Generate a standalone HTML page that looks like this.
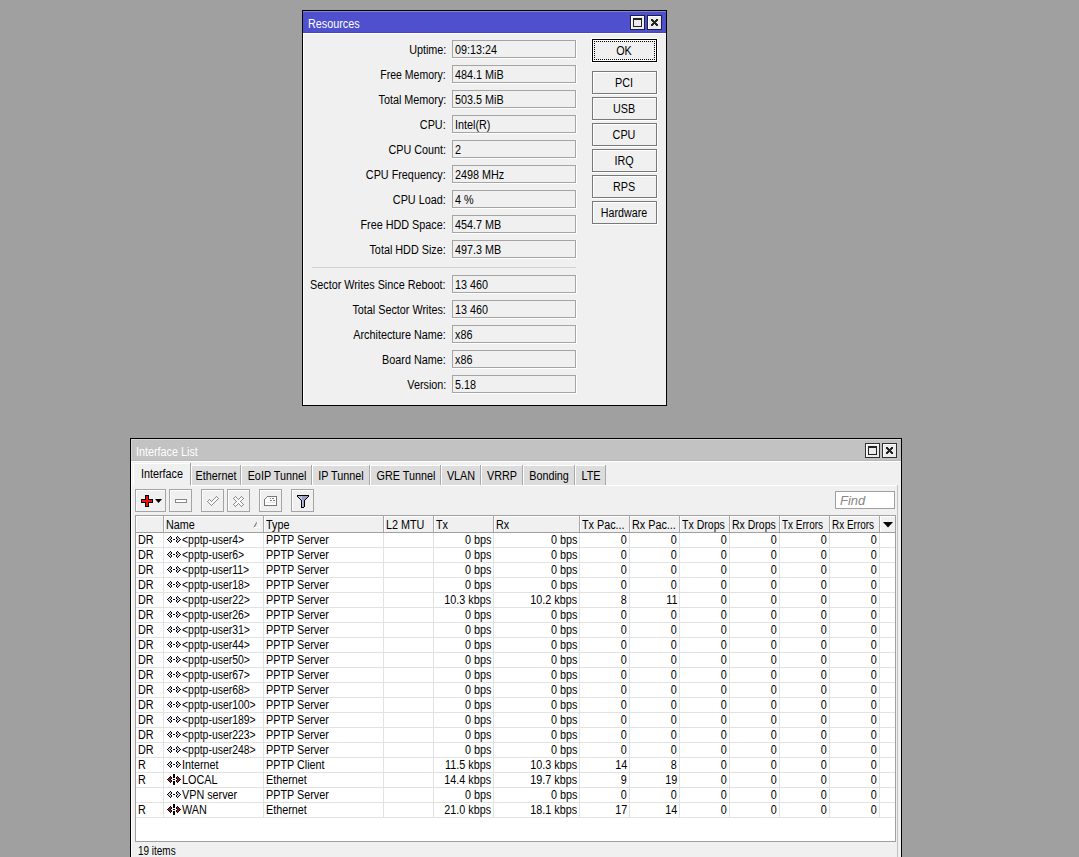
<!DOCTYPE html>
<html><head><meta charset="utf-8"><style>
*{margin:0;padding:0;box-sizing:border-box}
html,body{width:1079px;height:857px;overflow:hidden;background:#a0a0a0;position:relative}
.a{position:absolute}
.t{position:absolute;font-family:"Liberation Sans",sans-serif;font-size:12px;line-height:14px;white-space:nowrap;color:#000;transform:scaleX(0.9)}
</style></head><body>
<div class="a" style="left:302px;top:10px;width:365px;height:396px;background:#000"></div><div class="a" style="left:303px;top:11px;width:363px;height:394px;background:#f0f0f0"></div><div class="a" style="left:303px;top:33px;width:1px;height:372px;background:#fff"></div><div class="a" style="left:303px;top:33px;width:363px;height:1px;background:#fff"></div><div class="a" style="left:303px;top:11px;width:363px;height:22px;background:#4e50ce"></div><div class="a" style="left:303px;top:11px;width:363px;height:1px;background:#8484d4"></div><div class="a" style="left:303px;top:32px;width:363px;height:1px;background:#4848b4"></div><div class="t" style="left:308px;top:17px;transform-origin:0 0;color:#fff">Resources</div><div class="a" style="left:630px;top:15px;width:15px;height:15px;background:#1c1c48"></div><div class="a" style="left:631px;top:16px;width:13px;height:13px;background:#fff"></div><div class="a" style="left:632px;top:17px;width:12px;height:12px;background:#ececec"></div><div class="a" style="left:647px;top:15px;width:15px;height:15px;background:#1c1c48"></div><div class="a" style="left:648px;top:16px;width:13px;height:13px;background:#fff"></div><div class="a" style="left:649px;top:17px;width:12px;height:12px;background:#ececec"></div><div class="a" style="left:633px;top:18px;width:9px;height:9px;background:#222"></div><div class="a" style="left:634px;top:20px;width:7px;height:6px;background:#ececec"></div><svg class="a" style="left:651px;top:19px" width="7" height="7" viewBox="0 0 7 7" shape-rendering="crispEdges"><path d="M0 0h1v1h-1zM1 0h1v1h-1zM5 0h1v1h-1zM6 0h1v1h-1zM0 1h1v1h-1zM1 1h1v1h-1zM2 1h1v1h-1zM4 1h1v1h-1zM5 1h1v1h-1zM6 1h1v1h-1zM1 2h1v1h-1zM2 2h1v1h-1zM3 2h1v1h-1zM4 2h1v1h-1zM5 2h1v1h-1zM2 3h1v1h-1zM3 3h1v1h-1zM4 3h1v1h-1zM1 4h1v1h-1zM2 4h1v1h-1zM3 4h1v1h-1zM4 4h1v1h-1zM5 4h1v1h-1zM0 5h1v1h-1zM1 5h1v1h-1zM2 5h1v1h-1zM4 5h1v1h-1zM5 5h1v1h-1zM6 5h1v1h-1zM0 6h1v1h-1zM1 6h1v1h-1zM5 6h1v1h-1zM6 6h1v1h-1z" fill="#262626"/></svg><div class="a" style="left:452px;top:40px;width:125px;height:19px;background:#fff"></div><div class="a" style="left:452px;top:40px;width:124px;height:18px;background:#a4a4a4"></div><div class="a" style="left:453px;top:41px;width:122px;height:16px;background:#f0f0f0"></div><div class="t" style="right:633px;top:43px;transform-origin:100% 0;">Uptime:</div><div class="t" style="left:455px;top:43px;transform-origin:0 0;">09:13:24</div><div class="a" style="left:452px;top:65px;width:125px;height:19px;background:#fff"></div><div class="a" style="left:452px;top:65px;width:124px;height:18px;background:#a4a4a4"></div><div class="a" style="left:453px;top:66px;width:122px;height:16px;background:#f0f0f0"></div><div class="t" style="right:633px;top:68px;transform-origin:100% 0;;transform:scaleX(0.875)">Free Memory:</div><div class="t" style="left:455px;top:68px;transform-origin:0 0;">484.1 MiB</div><div class="a" style="left:452px;top:90px;width:125px;height:19px;background:#fff"></div><div class="a" style="left:452px;top:90px;width:124px;height:18px;background:#a4a4a4"></div><div class="a" style="left:453px;top:91px;width:122px;height:16px;background:#f0f0f0"></div><div class="t" style="right:633px;top:93px;transform-origin:100% 0;">Total Memory:</div><div class="t" style="left:455px;top:93px;transform-origin:0 0;">503.5 MiB</div><div class="a" style="left:452px;top:115px;width:125px;height:19px;background:#fff"></div><div class="a" style="left:452px;top:115px;width:124px;height:18px;background:#a4a4a4"></div><div class="a" style="left:453px;top:116px;width:122px;height:16px;background:#f0f0f0"></div><div class="t" style="right:633px;top:118px;transform-origin:100% 0;">CPU:</div><div class="t" style="left:455px;top:118px;transform-origin:0 0;">Intel(R)</div><div class="a" style="left:452px;top:140px;width:125px;height:19px;background:#fff"></div><div class="a" style="left:452px;top:140px;width:124px;height:18px;background:#a4a4a4"></div><div class="a" style="left:453px;top:141px;width:122px;height:16px;background:#f0f0f0"></div><div class="t" style="right:633px;top:143px;transform-origin:100% 0;">CPU Count:</div><div class="t" style="left:455px;top:143px;transform-origin:0 0;">2</div><div class="a" style="left:452px;top:165px;width:125px;height:19px;background:#fff"></div><div class="a" style="left:452px;top:165px;width:124px;height:18px;background:#a4a4a4"></div><div class="a" style="left:453px;top:166px;width:122px;height:16px;background:#f0f0f0"></div><div class="t" style="right:633px;top:168px;transform-origin:100% 0;">CPU Frequency:</div><div class="t" style="left:455px;top:168px;transform-origin:0 0;">2498 MHz</div><div class="a" style="left:452px;top:190px;width:125px;height:19px;background:#fff"></div><div class="a" style="left:452px;top:190px;width:124px;height:18px;background:#a4a4a4"></div><div class="a" style="left:453px;top:191px;width:122px;height:16px;background:#f0f0f0"></div><div class="t" style="right:633px;top:193px;transform-origin:100% 0;">CPU Load:</div><div class="t" style="left:455px;top:193px;transform-origin:0 0;">4 %</div><div class="a" style="left:452px;top:215px;width:125px;height:19px;background:#fff"></div><div class="a" style="left:452px;top:215px;width:124px;height:18px;background:#a4a4a4"></div><div class="a" style="left:453px;top:216px;width:122px;height:16px;background:#f0f0f0"></div><div class="t" style="right:633px;top:218px;transform-origin:100% 0;">Free HDD Space:</div><div class="t" style="left:455px;top:218px;transform-origin:0 0;">454.7 MB</div><div class="a" style="left:452px;top:240px;width:125px;height:19px;background:#fff"></div><div class="a" style="left:452px;top:240px;width:124px;height:18px;background:#a4a4a4"></div><div class="a" style="left:453px;top:241px;width:122px;height:16px;background:#f0f0f0"></div><div class="t" style="right:633px;top:243px;transform-origin:100% 0;">Total HDD Size:</div><div class="t" style="left:455px;top:243px;transform-origin:0 0;">497.3 MB</div><div class="a" style="left:452px;top:275px;width:125px;height:19px;background:#fff"></div><div class="a" style="left:452px;top:275px;width:124px;height:18px;background:#a4a4a4"></div><div class="a" style="left:453px;top:276px;width:122px;height:16px;background:#f0f0f0"></div><div class="t" style="right:633px;top:278px;transform-origin:100% 0;">Sector Writes Since Reboot:</div><div class="t" style="left:455px;top:278px;transform-origin:0 0;">13 460</div><div class="a" style="left:452px;top:300px;width:125px;height:19px;background:#fff"></div><div class="a" style="left:452px;top:300px;width:124px;height:18px;background:#a4a4a4"></div><div class="a" style="left:453px;top:301px;width:122px;height:16px;background:#f0f0f0"></div><div class="t" style="right:633px;top:303px;transform-origin:100% 0;">Total Sector Writes:</div><div class="t" style="left:455px;top:303px;transform-origin:0 0;">13 460</div><div class="a" style="left:452px;top:325px;width:125px;height:19px;background:#fff"></div><div class="a" style="left:452px;top:325px;width:124px;height:18px;background:#a4a4a4"></div><div class="a" style="left:453px;top:326px;width:122px;height:16px;background:#f0f0f0"></div><div class="t" style="right:633px;top:328px;transform-origin:100% 0;">Architecture Name:</div><div class="t" style="left:455px;top:328px;transform-origin:0 0;">x86</div><div class="a" style="left:452px;top:350px;width:125px;height:19px;background:#fff"></div><div class="a" style="left:452px;top:350px;width:124px;height:18px;background:#a4a4a4"></div><div class="a" style="left:453px;top:351px;width:122px;height:16px;background:#f0f0f0"></div><div class="t" style="right:633px;top:353px;transform-origin:100% 0;">Board Name:</div><div class="t" style="left:455px;top:353px;transform-origin:0 0;">x86</div><div class="a" style="left:452px;top:375px;width:125px;height:19px;background:#fff"></div><div class="a" style="left:452px;top:375px;width:124px;height:18px;background:#a4a4a4"></div><div class="a" style="left:453px;top:376px;width:122px;height:16px;background:#f0f0f0"></div><div class="t" style="right:633px;top:378px;transform-origin:100% 0;">Version:</div><div class="t" style="left:455px;top:378px;transform-origin:0 0;">5.18</div><div class="a" style="left:312px;top:267px;width:264px;height:1px;background:#d0d0d0"></div><div class="a" style="left:591px;top:38px;width:67px;height:25px;background:#fff"></div><div class="a" style="left:592px;top:39px;width:65px;height:23px;background:#000"></div><div class="a" style="left:593px;top:40px;width:63px;height:21px;background:#fff"></div><div class="a" style="left:594px;top:41px;width:61px;height:19px;background:#f0f0f0"></div><div class="a" style="left:594px;top:41px;width:61px;height:19px;border:1px dotted #000"></div><div class="t" style="left:424px;width:400px;text-align:center;top:44px;transform-origin:50% 0;">OK</div><div class="a" style="left:592px;top:71px;width:66px;height:24px;background:#fff"></div><div class="a" style="left:592px;top:71px;width:65px;height:23px;background:#787878"></div><div class="a" style="left:593px;top:72px;width:63px;height:21px;background:#fff"></div><div class="a" style="left:594px;top:73px;width:62px;height:20px;background:#f0f0f0"></div><div class="t" style="left:424px;width:400px;text-align:center;top:76px;transform-origin:50% 0;">PCI</div><div class="a" style="left:592px;top:97px;width:66px;height:24px;background:#fff"></div><div class="a" style="left:592px;top:97px;width:65px;height:23px;background:#787878"></div><div class="a" style="left:593px;top:98px;width:63px;height:21px;background:#fff"></div><div class="a" style="left:594px;top:99px;width:62px;height:20px;background:#f0f0f0"></div><div class="t" style="left:424px;width:400px;text-align:center;top:102px;transform-origin:50% 0;">USB</div><div class="a" style="left:592px;top:123px;width:66px;height:24px;background:#fff"></div><div class="a" style="left:592px;top:123px;width:65px;height:23px;background:#787878"></div><div class="a" style="left:593px;top:124px;width:63px;height:21px;background:#fff"></div><div class="a" style="left:594px;top:125px;width:62px;height:20px;background:#f0f0f0"></div><div class="t" style="left:424px;width:400px;text-align:center;top:128px;transform-origin:50% 0;">CPU</div><div class="a" style="left:592px;top:149px;width:66px;height:24px;background:#fff"></div><div class="a" style="left:592px;top:149px;width:65px;height:23px;background:#787878"></div><div class="a" style="left:593px;top:150px;width:63px;height:21px;background:#fff"></div><div class="a" style="left:594px;top:151px;width:62px;height:20px;background:#f0f0f0"></div><div class="t" style="left:424px;width:400px;text-align:center;top:154px;transform-origin:50% 0;">IRQ</div><div class="a" style="left:592px;top:175px;width:66px;height:24px;background:#fff"></div><div class="a" style="left:592px;top:175px;width:65px;height:23px;background:#787878"></div><div class="a" style="left:593px;top:176px;width:63px;height:21px;background:#fff"></div><div class="a" style="left:594px;top:177px;width:62px;height:20px;background:#f0f0f0"></div><div class="t" style="left:424px;width:400px;text-align:center;top:180px;transform-origin:50% 0;">RPS</div><div class="a" style="left:592px;top:201px;width:66px;height:24px;background:#fff"></div><div class="a" style="left:592px;top:201px;width:65px;height:23px;background:#787878"></div><div class="a" style="left:593px;top:202px;width:63px;height:21px;background:#fff"></div><div class="a" style="left:594px;top:203px;width:62px;height:20px;background:#f0f0f0"></div><div class="t" style="left:424px;width:400px;text-align:center;top:206px;transform-origin:50% 0;;transform:scaleX(0.89)">Hardware</div><div class="a" style="left:130px;top:438px;width:772px;height:443px;background:#000"></div><div class="a" style="left:131px;top:439px;width:770px;height:441px;background:#f0f0f0"></div><div class="a" style="left:131px;top:461px;width:1px;height:419px;background:#fff"></div><div class="a" style="left:131px;top:461px;width:770px;height:1px;background:#fff"></div><div class="a" style="left:131px;top:439px;width:770px;height:22px;background:#c2c2c2"></div><div class="a" style="left:131px;top:439px;width:770px;height:1px;background:#d4d4d4"></div><div class="a" style="left:131px;top:439px;width:1px;height:22px;background:#d4d4d4"></div><div class="a" style="left:131px;top:460px;width:770px;height:1px;background:#b8b8b8"></div><div class="t" style="left:136px;top:445px;transform-origin:0 0;color:#fff">Interface List</div><div class="a" style="left:865px;top:443px;width:15px;height:15px;background:#303030"></div><div class="a" style="left:866px;top:444px;width:13px;height:13px;background:#fff"></div><div class="a" style="left:867px;top:445px;width:12px;height:12px;background:#ececec"></div><div class="a" style="left:882px;top:443px;width:15px;height:15px;background:#303030"></div><div class="a" style="left:883px;top:444px;width:13px;height:13px;background:#fff"></div><div class="a" style="left:884px;top:445px;width:12px;height:12px;background:#ececec"></div><div class="a" style="left:868px;top:446px;width:9px;height:9px;background:#222"></div><div class="a" style="left:869px;top:448px;width:7px;height:6px;background:#ececec"></div><svg class="a" style="left:886px;top:447px" width="7" height="7" viewBox="0 0 7 7" shape-rendering="crispEdges"><path d="M0 0h1v1h-1zM1 0h1v1h-1zM5 0h1v1h-1zM6 0h1v1h-1zM0 1h1v1h-1zM1 1h1v1h-1zM2 1h1v1h-1zM4 1h1v1h-1zM5 1h1v1h-1zM6 1h1v1h-1zM1 2h1v1h-1zM2 2h1v1h-1zM3 2h1v1h-1zM4 2h1v1h-1zM5 2h1v1h-1zM2 3h1v1h-1zM3 3h1v1h-1zM4 3h1v1h-1zM1 4h1v1h-1zM2 4h1v1h-1zM3 4h1v1h-1zM4 4h1v1h-1zM5 4h1v1h-1zM0 5h1v1h-1zM1 5h1v1h-1zM2 5h1v1h-1zM4 5h1v1h-1zM5 5h1v1h-1zM6 5h1v1h-1zM0 6h1v1h-1zM1 6h1v1h-1zM5 6h1v1h-1zM6 6h1v1h-1z" fill="#262626"/></svg><div class="a" style="left:191px;top:485px;width:706px;height:1px;background:#fff"></div><div class="a" style="left:133px;top:463px;width:57px;height:22px;background:#f0f0f0"></div><div class="a" style="left:133px;top:463px;width:57px;height:1px;background:#fff"></div><div class="a" style="left:133px;top:463px;width:1px;height:22px;background:#fff"></div><div class="a" style="left:190px;top:463px;width:1px;height:22px;background:#a0a0a0"></div><div class="t" style="left:-38.0px;width:400px;text-align:center;top:467px;transform-origin:50% 0;">Interface</div><div class="a" style="left:191px;top:465px;width:49px;height:20px;background:#dcdcdc"></div><div class="a" style="left:191px;top:465px;width:49px;height:1px;background:#fff"></div><div class="a" style="left:191px;top:465px;width:1px;height:20px;background:#fff"></div><div class="a" style="left:240px;top:465px;width:1px;height:20px;background:#a8a8a8"></div><div class="t" style="left:16.0px;width:400px;text-align:center;top:469px;transform-origin:50% 0;">Ethernet</div><div class="a" style="left:241px;top:465px;width:70px;height:20px;background:#dcdcdc"></div><div class="a" style="left:241px;top:465px;width:70px;height:1px;background:#fff"></div><div class="a" style="left:241px;top:465px;width:1px;height:20px;background:#fff"></div><div class="a" style="left:311px;top:465px;width:1px;height:20px;background:#a8a8a8"></div><div class="t" style="left:76.5px;width:400px;text-align:center;top:469px;transform-origin:50% 0;">EoIP Tunnel</div><div class="a" style="left:312px;top:465px;width:57px;height:20px;background:#dcdcdc"></div><div class="a" style="left:312px;top:465px;width:57px;height:1px;background:#fff"></div><div class="a" style="left:312px;top:465px;width:1px;height:20px;background:#fff"></div><div class="a" style="left:369px;top:465px;width:1px;height:20px;background:#a8a8a8"></div><div class="t" style="left:141.0px;width:400px;text-align:center;top:469px;transform-origin:50% 0;">IP Tunnel</div><div class="a" style="left:370px;top:465px;width:70px;height:20px;background:#dcdcdc"></div><div class="a" style="left:370px;top:465px;width:70px;height:1px;background:#fff"></div><div class="a" style="left:370px;top:465px;width:1px;height:20px;background:#fff"></div><div class="a" style="left:440px;top:465px;width:1px;height:20px;background:#a8a8a8"></div><div class="t" style="left:205.5px;width:400px;text-align:center;top:469px;transform-origin:50% 0;">GRE Tunnel</div><div class="a" style="left:441px;top:465px;width:39px;height:20px;background:#dcdcdc"></div><div class="a" style="left:441px;top:465px;width:39px;height:1px;background:#fff"></div><div class="a" style="left:441px;top:465px;width:1px;height:20px;background:#fff"></div><div class="a" style="left:480px;top:465px;width:1px;height:20px;background:#a8a8a8"></div><div class="t" style="left:261.0px;width:400px;text-align:center;top:469px;transform-origin:50% 0;">VLAN</div><div class="a" style="left:481px;top:465px;width:41px;height:20px;background:#dcdcdc"></div><div class="a" style="left:481px;top:465px;width:41px;height:1px;background:#fff"></div><div class="a" style="left:481px;top:465px;width:1px;height:20px;background:#fff"></div><div class="a" style="left:522px;top:465px;width:1px;height:20px;background:#a8a8a8"></div><div class="t" style="left:302.0px;width:400px;text-align:center;top:469px;transform-origin:50% 0;">VRRP</div><div class="a" style="left:523px;top:465px;width:51px;height:20px;background:#dcdcdc"></div><div class="a" style="left:523px;top:465px;width:51px;height:1px;background:#fff"></div><div class="a" style="left:523px;top:465px;width:1px;height:20px;background:#fff"></div><div class="a" style="left:574px;top:465px;width:1px;height:20px;background:#a8a8a8"></div><div class="t" style="left:349.0px;width:400px;text-align:center;top:469px;transform-origin:50% 0;">Bonding</div><div class="a" style="left:575px;top:465px;width:30px;height:20px;background:#dcdcdc"></div><div class="a" style="left:575px;top:465px;width:30px;height:1px;background:#fff"></div><div class="a" style="left:575px;top:465px;width:1px;height:20px;background:#fff"></div><div class="a" style="left:605px;top:465px;width:1px;height:20px;background:#a8a8a8"></div><div class="t" style="left:390.5px;width:400px;text-align:center;top:469px;transform-origin:50% 0;">LTE</div><div class="a" style="left:897px;top:485px;width:1px;height:400px;background:#c0c0c0"></div><div class="a" style="left:135px;top:489px;width:31px;height:23px;background:#a4a4a4"></div><div class="a" style="left:136px;top:490px;width:29px;height:21px;background:#fff"></div><div class="a" style="left:137px;top:491px;width:28px;height:20px;background:#f0f0f0"></div><div class="a" style="left:169px;top:489px;width:23px;height:23px;background:#a4a4a4"></div><div class="a" style="left:170px;top:490px;width:21px;height:21px;background:#fff"></div><div class="a" style="left:171px;top:491px;width:20px;height:20px;background:#f0f0f0"></div><div class="a" style="left:201px;top:489px;width:23px;height:23px;background:#a4a4a4"></div><div class="a" style="left:202px;top:490px;width:21px;height:21px;background:#fff"></div><div class="a" style="left:203px;top:491px;width:20px;height:20px;background:#f0f0f0"></div><div class="a" style="left:227px;top:489px;width:23px;height:23px;background:#a4a4a4"></div><div class="a" style="left:228px;top:490px;width:21px;height:21px;background:#fff"></div><div class="a" style="left:229px;top:491px;width:20px;height:20px;background:#f0f0f0"></div><div class="a" style="left:259px;top:489px;width:23px;height:23px;background:#a4a4a4"></div><div class="a" style="left:260px;top:490px;width:21px;height:21px;background:#fff"></div><div class="a" style="left:261px;top:491px;width:20px;height:20px;background:#f0f0f0"></div><div class="a" style="left:291px;top:489px;width:23px;height:23px;background:#a4a4a4"></div><div class="a" style="left:292px;top:490px;width:21px;height:21px;background:#fff"></div><div class="a" style="left:293px;top:491px;width:20px;height:20px;background:#f0f0f0"></div><svg class="a" style="left:141px;top:495px" width="21" height="12" viewBox="0 0 21 12"><path d="M4 0h4v4h4v4h-4v4h-4v-4h-4v-4h4z" fill="#000"/><path d="M5 1h2v4h4v2h-4v4h-2v-4h-4v-2h4z" fill="#f01010"/><path d="M14 4h7l-3.5 4z" fill="#000"/></svg><div class="a" style="left:175px;top:499px;width:12px;height:4px;background:#888"></div><div class="a" style="left:176px;top:500px;width:10px;height:2px;background:#fff"></div><svg class="a" style="left:207px;top:496px" width="12" height="10" viewBox="0 0 12 10" shape-rendering="crispEdges"><path d="M1 5h1v1h-1zM2 4h1v1h-1zM2 5h1v1h-1zM2 6h1v1h-1zM3 5h1v1h-1zM3 6h1v1h-1zM3 7h1v1h-1zM4 6h1v1h-1zM4 7h1v1h-1zM4 8h1v1h-1zM5 5h1v1h-1zM5 6h1v1h-1zM5 7h1v1h-1zM6 4h1v1h-1zM6 5h1v1h-1zM6 6h1v1h-1zM7 3h1v1h-1zM7 4h1v1h-1zM7 5h1v1h-1zM8 2h1v1h-1zM8 3h1v1h-1zM8 4h1v1h-1zM9 1h1v1h-1zM9 2h1v1h-1zM9 3h1v1h-1zM10 2h1v1h-1z" fill="#fafafa"/><path d="M0 5h1v1h-1zM1 4h1v1h-1zM2 3h1v1h-1zM3 4h1v1h-1zM4 5h1v1h-1zM5 4h1v1h-1zM6 3h1v1h-1zM7 2h1v1h-1zM8 1h1v1h-1zM9 0h1v1h-1zM10 1h1v1h-1zM11 2h1v1h-1zM10 3h1v1h-1zM9 4h1v1h-1zM8 5h1v1h-1zM7 6h1v1h-1zM6 7h1v1h-1zM5 8h1v1h-1zM4 9h1v1h-1zM3 8h1v1h-1zM2 7h1v1h-1zM1 6h1v1h-1z" fill="#8c8c8c"/></svg><svg class="a" style="left:233px;top:496px" width="11" height="11" viewBox="0 0 11 11" shape-rendering="crispEdges"><path d="M2 1h1v1h-1zM1 2h1v1h-1zM2 2h1v1h-1zM2 3h1v1h-1zM3 2h1v1h-1zM3 3h1v1h-1zM3 4h1v1h-1zM4 3h1v1h-1zM4 4h1v1h-1zM4 5h1v1h-1zM5 4h1v1h-1zM5 5h1v1h-1zM5 6h1v1h-1zM6 5h1v1h-1zM6 4h1v1h-1zM6 3h1v1h-1zM7 2h1v1h-1zM7 3h1v1h-1zM7 4h1v1h-1zM8 1h1v1h-1zM8 2h1v1h-1zM8 3h1v1h-1zM9 2h1v1h-1zM4 6h1v1h-1zM4 7h1v1h-1zM3 6h1v1h-1zM3 7h1v1h-1zM3 8h1v1h-1zM2 7h1v1h-1zM2 8h1v1h-1zM2 9h1v1h-1zM1 8h1v1h-1zM6 6h1v1h-1zM6 7h1v1h-1zM7 6h1v1h-1zM7 7h1v1h-1zM7 8h1v1h-1zM8 7h1v1h-1zM8 8h1v1h-1zM8 9h1v1h-1zM9 8h1v1h-1z" fill="#fafafa"/><path d="M2 0h1v1h-1zM1 1h1v1h-1zM0 2h1v1h-1zM1 3h1v1h-1zM2 4h1v1h-1zM3 5h1v1h-1zM2 6h1v1h-1zM1 7h1v1h-1zM0 8h1v1h-1zM1 9h1v1h-1zM2 10h1v1h-1zM3 9h1v1h-1zM4 8h1v1h-1zM5 7h1v1h-1zM6 8h1v1h-1zM7 9h1v1h-1zM8 10h1v1h-1zM9 9h1v1h-1zM10 8h1v1h-1zM9 7h1v1h-1zM8 6h1v1h-1zM7 5h1v1h-1zM8 4h1v1h-1zM9 3h1v1h-1zM10 2h1v1h-1zM9 1h1v1h-1zM8 0h1v1h-1zM7 1h1v1h-1zM6 2h1v1h-1zM5 3h1v1h-1zM4 2h1v1h-1zM3 1h1v1h-1z" fill="#8c8c8c"/></svg><svg class="a" style="left:264px;top:496px" width="13" height="10" viewBox="0 0 13 10" shape-rendering="crispEdges"><path d="M0.5 9.5V3.5L3.5 0.5H12.5V9.5Z" fill="#fff" stroke="#787878" stroke-width="1"/><path d="M6 2h1v1h-1zM8 2h2v1h-2zM6 4h2v1h-2zM9 4h2v1h-2z" fill="#808080"/><path d="M2 6h9v1h-9z" fill="#e6e6e6"/></svg><svg class="a" style="left:293px;top:492px" width="20" height="18" viewBox="0 0 20 18" shape-rendering="crispEdges"><path d="M5 4h1v1h-1zM6 4h1v1h-1zM7 4h1v1h-1zM8 4h1v1h-1zM9 4h1v1h-1zM10 4h1v1h-1zM11 4h1v1h-1zM12 4h1v1h-1zM13 4h1v1h-1zM14 4h1v1h-1zM6 5h1v1h-1zM7 5h1v1h-1zM8 5h1v1h-1zM9 5h1v1h-1zM10 5h1v1h-1zM11 5h1v1h-1zM12 5h1v1h-1zM13 5h1v1h-1zM7 6h1v1h-1zM8 6h1v1h-1zM9 6h1v1h-1zM10 6h1v1h-1zM11 6h1v1h-1zM12 6h1v1h-1zM8 7h1v1h-1zM9 7h1v1h-1zM10 7h1v1h-1zM11 7h1v1h-1zM9 8h1v1h-1zM9 9h1v1h-1zM9 10h1v1h-1zM9 11h1v1h-1zM9 12h1v1h-1zM9 13h1v1h-1zM9 14h1v1h-1zM10 8h1v1h-1zM10 9h1v1h-1zM10 10h1v1h-1zM10 11h1v1h-1zM10 12h1v1h-1zM10 13h1v1h-1zM10 14h1v1h-1z" fill="#98a0c8"/><path d="M5 4h1v1h-1zM6 4h1v1h-1zM6 5h1v1h-1zM7 5h1v1h-1zM7 6h1v1h-1zM8 4h1v1h-1zM8 5h1v1h-1zM8 6h1v1h-1zM8 7h1v1h-1zM9 8h1v1h-1zM9 9h1v1h-1zM9 10h1v1h-1zM9 11h1v1h-1zM9 12h1v1h-1zM9 13h1v1h-1zM9 14h1v1h-1z" fill="#c0c8e8"/><path d="M4 3h1v1h-1zM5 3h1v1h-1zM6 3h1v1h-1zM7 3h1v1h-1zM8 3h1v1h-1zM9 3h1v1h-1zM10 3h1v1h-1zM11 3h1v1h-1zM12 3h1v1h-1zM13 3h1v1h-1zM14 3h1v1h-1zM15 3h1v1h-1zM4 4h1v1h-1zM15 4h1v1h-1zM5 5h1v1h-1zM14 5h1v1h-1zM6 6h1v1h-1zM13 6h1v1h-1zM7 7h1v1h-1zM12 7h1v1h-1zM8 8h1v1h-1zM8 9h1v1h-1zM8 10h1v1h-1zM8 11h1v1h-1zM8 12h1v1h-1zM8 13h1v1h-1zM8 14h1v1h-1zM8 15h1v1h-1zM11 8h1v1h-1zM11 9h1v1h-1zM11 10h1v1h-1zM11 11h1v1h-1zM11 12h1v1h-1zM11 13h1v1h-1zM11 14h1v1h-1zM9 15h1v1h-1zM10 15h1v1h-1z" fill="#000"/></svg><div class="a" style="left:835px;top:491px;width:60px;height:18px;background:#a0a0a0"></div><div class="a" style="left:836px;top:492px;width:58px;height:16px;background:#fff"></div><div class="t" style="left:840px;top:494px;transform-origin:0 0;color:#888;font-style:italic;transform:scaleX(1.08)">Find</div><div class="a" style="left:135px;top:515px;width:761px;height:327px;background:#a0a0a0"></div><div class="a" style="left:136px;top:516px;width:759px;height:325px;background:#fff"></div><div class="a" style="left:136px;top:516px;width:759px;height:16px;background:#f0f0f0"></div><div class="a" style="left:136px;top:532px;width:759px;height:1px;background:#a0a0a0"></div><div class="a" style="left:136px;top:516px;width:759px;height:1px;background:#fff"></div><div class="a" style="left:136px;top:516px;width:1px;height:16px;background:#fff"></div><div class="a" style="left:163px;top:516px;width:1px;height:16px;background:#a8a8a8"></div><div class="a" style="left:164px;top:516px;width:1px;height:16px;background:#fff"></div><div class="a" style="left:263px;top:516px;width:1px;height:16px;background:#a8a8a8"></div><div class="a" style="left:264px;top:516px;width:1px;height:16px;background:#fff"></div><div class="a" style="left:383px;top:516px;width:1px;height:16px;background:#a8a8a8"></div><div class="a" style="left:384px;top:516px;width:1px;height:16px;background:#fff"></div><div class="a" style="left:433px;top:516px;width:1px;height:16px;background:#a8a8a8"></div><div class="a" style="left:434px;top:516px;width:1px;height:16px;background:#fff"></div><div class="a" style="left:493px;top:516px;width:1px;height:16px;background:#a8a8a8"></div><div class="a" style="left:494px;top:516px;width:1px;height:16px;background:#fff"></div><div class="a" style="left:579px;top:516px;width:1px;height:16px;background:#a8a8a8"></div><div class="a" style="left:580px;top:516px;width:1px;height:16px;background:#fff"></div><div class="a" style="left:629px;top:516px;width:1px;height:16px;background:#a8a8a8"></div><div class="a" style="left:630px;top:516px;width:1px;height:16px;background:#fff"></div><div class="a" style="left:679px;top:516px;width:1px;height:16px;background:#a8a8a8"></div><div class="a" style="left:680px;top:516px;width:1px;height:16px;background:#fff"></div><div class="a" style="left:729px;top:516px;width:1px;height:16px;background:#a8a8a8"></div><div class="a" style="left:730px;top:516px;width:1px;height:16px;background:#fff"></div><div class="a" style="left:779px;top:516px;width:1px;height:16px;background:#a8a8a8"></div><div class="a" style="left:780px;top:516px;width:1px;height:16px;background:#fff"></div><div class="a" style="left:829px;top:516px;width:1px;height:16px;background:#a8a8a8"></div><div class="a" style="left:830px;top:516px;width:1px;height:16px;background:#fff"></div><div class="a" style="left:879px;top:516px;width:1px;height:16px;background:#a8a8a8"></div><div class="a" style="left:880px;top:516px;width:1px;height:16px;background:#fff"></div><div class="t" style="left:166px;top:518px;transform-origin:0 0;">Name</div><div class="t" style="left:266px;top:518px;transform-origin:0 0;">Type</div><div class="t" style="left:386px;top:518px;transform-origin:0 0;">L2 MTU</div><div class="t" style="left:436px;top:518px;transform-origin:0 0;">Tx</div><div class="t" style="left:496px;top:518px;transform-origin:0 0;">Rx</div><div class="t" style="left:582px;top:518px;transform-origin:0 0;">Tx Pac...</div><div class="t" style="left:632px;top:518px;transform-origin:0 0;">Rx Pac...</div><div class="t" style="left:682px;top:518px;transform-origin:0 0;;transform:scaleX(0.88)">Tx Drops</div><div class="t" style="left:732px;top:518px;transform-origin:0 0;;transform:scaleX(0.874)">Rx Drops</div><div class="t" style="left:782px;top:518px;transform-origin:0 0;;transform:scaleX(0.832)">Tx Errors</div><div class="t" style="left:832px;top:518px;transform-origin:0 0;;transform:scaleX(0.83)">Rx Errors</div><svg class="a" style="left:253px;top:521px" width="8" height="7" viewBox="0 0 8 7"><path d="M1 6.5 L4 1" stroke="#808080" stroke-width="1.2"/><path d="M4 1 L7 6.5 L1 6.5" stroke="#fff" stroke-width="1" fill="none"/></svg><svg class="a" style="left:883px;top:522px" width="10" height="6" viewBox="0 0 10 6"><path d="M0 0h10l-5 5.5z" fill="#000"/></svg><div class="a" style="left:136px;top:547px;width:759px;height:1px;background:#e2e2e2"></div><div class="a" style="left:136px;top:562px;width:759px;height:1px;background:#e2e2e2"></div><div class="a" style="left:136px;top:577px;width:759px;height:1px;background:#e2e2e2"></div><div class="a" style="left:136px;top:592px;width:759px;height:1px;background:#e2e2e2"></div><div class="a" style="left:136px;top:607px;width:759px;height:1px;background:#e2e2e2"></div><div class="a" style="left:136px;top:622px;width:759px;height:1px;background:#e2e2e2"></div><div class="a" style="left:136px;top:637px;width:759px;height:1px;background:#e2e2e2"></div><div class="a" style="left:136px;top:652px;width:759px;height:1px;background:#e2e2e2"></div><div class="a" style="left:136px;top:667px;width:759px;height:1px;background:#e2e2e2"></div><div class="a" style="left:136px;top:682px;width:759px;height:1px;background:#e2e2e2"></div><div class="a" style="left:136px;top:697px;width:759px;height:1px;background:#e2e2e2"></div><div class="a" style="left:136px;top:712px;width:759px;height:1px;background:#e2e2e2"></div><div class="a" style="left:136px;top:727px;width:759px;height:1px;background:#e2e2e2"></div><div class="a" style="left:136px;top:742px;width:759px;height:1px;background:#e2e2e2"></div><div class="a" style="left:136px;top:757px;width:759px;height:1px;background:#e2e2e2"></div><div class="a" style="left:136px;top:772px;width:759px;height:1px;background:#e2e2e2"></div><div class="a" style="left:136px;top:787px;width:759px;height:1px;background:#e2e2e2"></div><div class="a" style="left:136px;top:802px;width:759px;height:1px;background:#e2e2e2"></div><div class="a" style="left:136px;top:817px;width:759px;height:1px;background:#e2e2e2"></div><div class="a" style="left:163px;top:533px;width:1px;height:285px;background:#e2e2e2"></div><div class="a" style="left:263px;top:533px;width:1px;height:285px;background:#e2e2e2"></div><div class="a" style="left:383px;top:533px;width:1px;height:285px;background:#e2e2e2"></div><div class="a" style="left:433px;top:533px;width:1px;height:285px;background:#e2e2e2"></div><div class="a" style="left:493px;top:533px;width:1px;height:285px;background:#e2e2e2"></div><div class="a" style="left:579px;top:533px;width:1px;height:285px;background:#e2e2e2"></div><div class="a" style="left:629px;top:533px;width:1px;height:285px;background:#e2e2e2"></div><div class="a" style="left:679px;top:533px;width:1px;height:285px;background:#e2e2e2"></div><div class="a" style="left:729px;top:533px;width:1px;height:285px;background:#e2e2e2"></div><div class="a" style="left:779px;top:533px;width:1px;height:285px;background:#e2e2e2"></div><div class="a" style="left:829px;top:533px;width:1px;height:285px;background:#e2e2e2"></div><div class="a" style="left:879px;top:533px;width:1px;height:285px;background:#e2e2e2"></div><div class="t" style="left:138px;top:533px;transform-origin:0 0;">DR</div><svg class="a" style="left:167px;top:536px" width="14" height="7" viewBox="0 0 14 7" shape-rendering="crispEdges"><path d="M3 0h1v1h-1zM2 1h1v1h-1zM1 2h1v1h-1zM0 3h1v1h-1zM1 4h1v1h-1zM2 5h1v1h-1zM3 6h1v1h-1zM4 1h1v2h-1zM4 4h1v2h-1zM3 3h1v1h-1z" fill="#000"/><path d="M3 1h1v2h-1zM2 2h1v3h-1zM1 3h2v1h-2zM3 4h1v2h-1z" fill="#d0d0f0"/><path d="M6 3h2v1h-2z" fill="#000"/><path d="M10 0h1v1h-1zM11 1h1v1h-1zM12 2h1v1h-1zM13 3h1v1h-1zM12 4h1v1h-1zM11 5h1v1h-1zM10 6h1v1h-1zM9 1h1v2h-1zM9 4h1v2h-1zM10 3h1v1h-1z" fill="#000"/><path d="M10 1h1v2h-1zM11 2h1v3h-1zM11 3h2v1h-2zM10 4h1v2h-1z" fill="#d0d0f0"/></svg><div class="t" style="left:182px;top:533px;transform-origin:0 0;;transform:scaleX(0.87)">&lt;pptp-user4&gt;</div><div class="t" style="left:266px;top:533px;transform-origin:0 0;">PPTP Server</div><div class="t" style="right:588px;top:533px;transform-origin:100% 0;">0 bps</div><div class="t" style="right:502px;top:533px;transform-origin:100% 0;">0 bps</div><div class="t" style="right:452px;top:533px;transform-origin:100% 0;">0</div><div class="t" style="right:402px;top:533px;transform-origin:100% 0;">0</div><div class="t" style="right:352px;top:533px;transform-origin:100% 0;">0</div><div class="t" style="right:302px;top:533px;transform-origin:100% 0;">0</div><div class="t" style="right:252px;top:533px;transform-origin:100% 0;">0</div><div class="t" style="right:202px;top:533px;transform-origin:100% 0;">0</div><div class="t" style="left:138px;top:548px;transform-origin:0 0;">DR</div><svg class="a" style="left:167px;top:551px" width="14" height="7" viewBox="0 0 14 7" shape-rendering="crispEdges"><path d="M3 0h1v1h-1zM2 1h1v1h-1zM1 2h1v1h-1zM0 3h1v1h-1zM1 4h1v1h-1zM2 5h1v1h-1zM3 6h1v1h-1zM4 1h1v2h-1zM4 4h1v2h-1zM3 3h1v1h-1z" fill="#000"/><path d="M3 1h1v2h-1zM2 2h1v3h-1zM1 3h2v1h-2zM3 4h1v2h-1z" fill="#d0d0f0"/><path d="M6 3h2v1h-2z" fill="#000"/><path d="M10 0h1v1h-1zM11 1h1v1h-1zM12 2h1v1h-1zM13 3h1v1h-1zM12 4h1v1h-1zM11 5h1v1h-1zM10 6h1v1h-1zM9 1h1v2h-1zM9 4h1v2h-1zM10 3h1v1h-1z" fill="#000"/><path d="M10 1h1v2h-1zM11 2h1v3h-1zM11 3h2v1h-2zM10 4h1v2h-1z" fill="#d0d0f0"/></svg><div class="t" style="left:182px;top:548px;transform-origin:0 0;;transform:scaleX(0.87)">&lt;pptp-user6&gt;</div><div class="t" style="left:266px;top:548px;transform-origin:0 0;">PPTP Server</div><div class="t" style="right:588px;top:548px;transform-origin:100% 0;">0 bps</div><div class="t" style="right:502px;top:548px;transform-origin:100% 0;">0 bps</div><div class="t" style="right:452px;top:548px;transform-origin:100% 0;">0</div><div class="t" style="right:402px;top:548px;transform-origin:100% 0;">0</div><div class="t" style="right:352px;top:548px;transform-origin:100% 0;">0</div><div class="t" style="right:302px;top:548px;transform-origin:100% 0;">0</div><div class="t" style="right:252px;top:548px;transform-origin:100% 0;">0</div><div class="t" style="right:202px;top:548px;transform-origin:100% 0;">0</div><div class="t" style="left:138px;top:563px;transform-origin:0 0;">DR</div><svg class="a" style="left:167px;top:566px" width="14" height="7" viewBox="0 0 14 7" shape-rendering="crispEdges"><path d="M3 0h1v1h-1zM2 1h1v1h-1zM1 2h1v1h-1zM0 3h1v1h-1zM1 4h1v1h-1zM2 5h1v1h-1zM3 6h1v1h-1zM4 1h1v2h-1zM4 4h1v2h-1zM3 3h1v1h-1z" fill="#000"/><path d="M3 1h1v2h-1zM2 2h1v3h-1zM1 3h2v1h-2zM3 4h1v2h-1z" fill="#d0d0f0"/><path d="M6 3h2v1h-2z" fill="#000"/><path d="M10 0h1v1h-1zM11 1h1v1h-1zM12 2h1v1h-1zM13 3h1v1h-1zM12 4h1v1h-1zM11 5h1v1h-1zM10 6h1v1h-1zM9 1h1v2h-1zM9 4h1v2h-1zM10 3h1v1h-1z" fill="#000"/><path d="M10 1h1v2h-1zM11 2h1v3h-1zM11 3h2v1h-2zM10 4h1v2h-1z" fill="#d0d0f0"/></svg><div class="t" style="left:182px;top:563px;transform-origin:0 0;;transform:scaleX(0.87)">&lt;pptp-user11&gt;</div><div class="t" style="left:266px;top:563px;transform-origin:0 0;">PPTP Server</div><div class="t" style="right:588px;top:563px;transform-origin:100% 0;">0 bps</div><div class="t" style="right:502px;top:563px;transform-origin:100% 0;">0 bps</div><div class="t" style="right:452px;top:563px;transform-origin:100% 0;">0</div><div class="t" style="right:402px;top:563px;transform-origin:100% 0;">0</div><div class="t" style="right:352px;top:563px;transform-origin:100% 0;">0</div><div class="t" style="right:302px;top:563px;transform-origin:100% 0;">0</div><div class="t" style="right:252px;top:563px;transform-origin:100% 0;">0</div><div class="t" style="right:202px;top:563px;transform-origin:100% 0;">0</div><div class="t" style="left:138px;top:578px;transform-origin:0 0;">DR</div><svg class="a" style="left:167px;top:581px" width="14" height="7" viewBox="0 0 14 7" shape-rendering="crispEdges"><path d="M3 0h1v1h-1zM2 1h1v1h-1zM1 2h1v1h-1zM0 3h1v1h-1zM1 4h1v1h-1zM2 5h1v1h-1zM3 6h1v1h-1zM4 1h1v2h-1zM4 4h1v2h-1zM3 3h1v1h-1z" fill="#000"/><path d="M3 1h1v2h-1zM2 2h1v3h-1zM1 3h2v1h-2zM3 4h1v2h-1z" fill="#d0d0f0"/><path d="M6 3h2v1h-2z" fill="#000"/><path d="M10 0h1v1h-1zM11 1h1v1h-1zM12 2h1v1h-1zM13 3h1v1h-1zM12 4h1v1h-1zM11 5h1v1h-1zM10 6h1v1h-1zM9 1h1v2h-1zM9 4h1v2h-1zM10 3h1v1h-1z" fill="#000"/><path d="M10 1h1v2h-1zM11 2h1v3h-1zM11 3h2v1h-2zM10 4h1v2h-1z" fill="#d0d0f0"/></svg><div class="t" style="left:182px;top:578px;transform-origin:0 0;;transform:scaleX(0.87)">&lt;pptp-user18&gt;</div><div class="t" style="left:266px;top:578px;transform-origin:0 0;">PPTP Server</div><div class="t" style="right:588px;top:578px;transform-origin:100% 0;">0 bps</div><div class="t" style="right:502px;top:578px;transform-origin:100% 0;">0 bps</div><div class="t" style="right:452px;top:578px;transform-origin:100% 0;">0</div><div class="t" style="right:402px;top:578px;transform-origin:100% 0;">0</div><div class="t" style="right:352px;top:578px;transform-origin:100% 0;">0</div><div class="t" style="right:302px;top:578px;transform-origin:100% 0;">0</div><div class="t" style="right:252px;top:578px;transform-origin:100% 0;">0</div><div class="t" style="right:202px;top:578px;transform-origin:100% 0;">0</div><div class="t" style="left:138px;top:593px;transform-origin:0 0;">DR</div><svg class="a" style="left:167px;top:596px" width="14" height="7" viewBox="0 0 14 7" shape-rendering="crispEdges"><path d="M3 0h1v1h-1zM2 1h1v1h-1zM1 2h1v1h-1zM0 3h1v1h-1zM1 4h1v1h-1zM2 5h1v1h-1zM3 6h1v1h-1zM4 1h1v2h-1zM4 4h1v2h-1zM3 3h1v1h-1z" fill="#000"/><path d="M3 1h1v2h-1zM2 2h1v3h-1zM1 3h2v1h-2zM3 4h1v2h-1z" fill="#d0d0f0"/><path d="M6 3h2v1h-2z" fill="#000"/><path d="M10 0h1v1h-1zM11 1h1v1h-1zM12 2h1v1h-1zM13 3h1v1h-1zM12 4h1v1h-1zM11 5h1v1h-1zM10 6h1v1h-1zM9 1h1v2h-1zM9 4h1v2h-1zM10 3h1v1h-1z" fill="#000"/><path d="M10 1h1v2h-1zM11 2h1v3h-1zM11 3h2v1h-2zM10 4h1v2h-1z" fill="#d0d0f0"/></svg><div class="t" style="left:182px;top:593px;transform-origin:0 0;;transform:scaleX(0.87)">&lt;pptp-user22&gt;</div><div class="t" style="left:266px;top:593px;transform-origin:0 0;">PPTP Server</div><div class="t" style="right:588px;top:593px;transform-origin:100% 0;">10.3 kbps</div><div class="t" style="right:502px;top:593px;transform-origin:100% 0;">10.2 kbps</div><div class="t" style="right:452px;top:593px;transform-origin:100% 0;">8</div><div class="t" style="right:402px;top:593px;transform-origin:100% 0;">11</div><div class="t" style="right:352px;top:593px;transform-origin:100% 0;">0</div><div class="t" style="right:302px;top:593px;transform-origin:100% 0;">0</div><div class="t" style="right:252px;top:593px;transform-origin:100% 0;">0</div><div class="t" style="right:202px;top:593px;transform-origin:100% 0;">0</div><div class="t" style="left:138px;top:608px;transform-origin:0 0;">DR</div><svg class="a" style="left:167px;top:611px" width="14" height="7" viewBox="0 0 14 7" shape-rendering="crispEdges"><path d="M3 0h1v1h-1zM2 1h1v1h-1zM1 2h1v1h-1zM0 3h1v1h-1zM1 4h1v1h-1zM2 5h1v1h-1zM3 6h1v1h-1zM4 1h1v2h-1zM4 4h1v2h-1zM3 3h1v1h-1z" fill="#000"/><path d="M3 1h1v2h-1zM2 2h1v3h-1zM1 3h2v1h-2zM3 4h1v2h-1z" fill="#d0d0f0"/><path d="M6 3h2v1h-2z" fill="#000"/><path d="M10 0h1v1h-1zM11 1h1v1h-1zM12 2h1v1h-1zM13 3h1v1h-1zM12 4h1v1h-1zM11 5h1v1h-1zM10 6h1v1h-1zM9 1h1v2h-1zM9 4h1v2h-1zM10 3h1v1h-1z" fill="#000"/><path d="M10 1h1v2h-1zM11 2h1v3h-1zM11 3h2v1h-2zM10 4h1v2h-1z" fill="#d0d0f0"/></svg><div class="t" style="left:182px;top:608px;transform-origin:0 0;;transform:scaleX(0.87)">&lt;pptp-user26&gt;</div><div class="t" style="left:266px;top:608px;transform-origin:0 0;">PPTP Server</div><div class="t" style="right:588px;top:608px;transform-origin:100% 0;">0 bps</div><div class="t" style="right:502px;top:608px;transform-origin:100% 0;">0 bps</div><div class="t" style="right:452px;top:608px;transform-origin:100% 0;">0</div><div class="t" style="right:402px;top:608px;transform-origin:100% 0;">0</div><div class="t" style="right:352px;top:608px;transform-origin:100% 0;">0</div><div class="t" style="right:302px;top:608px;transform-origin:100% 0;">0</div><div class="t" style="right:252px;top:608px;transform-origin:100% 0;">0</div><div class="t" style="right:202px;top:608px;transform-origin:100% 0;">0</div><div class="t" style="left:138px;top:623px;transform-origin:0 0;">DR</div><svg class="a" style="left:167px;top:626px" width="14" height="7" viewBox="0 0 14 7" shape-rendering="crispEdges"><path d="M3 0h1v1h-1zM2 1h1v1h-1zM1 2h1v1h-1zM0 3h1v1h-1zM1 4h1v1h-1zM2 5h1v1h-1zM3 6h1v1h-1zM4 1h1v2h-1zM4 4h1v2h-1zM3 3h1v1h-1z" fill="#000"/><path d="M3 1h1v2h-1zM2 2h1v3h-1zM1 3h2v1h-2zM3 4h1v2h-1z" fill="#d0d0f0"/><path d="M6 3h2v1h-2z" fill="#000"/><path d="M10 0h1v1h-1zM11 1h1v1h-1zM12 2h1v1h-1zM13 3h1v1h-1zM12 4h1v1h-1zM11 5h1v1h-1zM10 6h1v1h-1zM9 1h1v2h-1zM9 4h1v2h-1zM10 3h1v1h-1z" fill="#000"/><path d="M10 1h1v2h-1zM11 2h1v3h-1zM11 3h2v1h-2zM10 4h1v2h-1z" fill="#d0d0f0"/></svg><div class="t" style="left:182px;top:623px;transform-origin:0 0;;transform:scaleX(0.87)">&lt;pptp-user31&gt;</div><div class="t" style="left:266px;top:623px;transform-origin:0 0;">PPTP Server</div><div class="t" style="right:588px;top:623px;transform-origin:100% 0;">0 bps</div><div class="t" style="right:502px;top:623px;transform-origin:100% 0;">0 bps</div><div class="t" style="right:452px;top:623px;transform-origin:100% 0;">0</div><div class="t" style="right:402px;top:623px;transform-origin:100% 0;">0</div><div class="t" style="right:352px;top:623px;transform-origin:100% 0;">0</div><div class="t" style="right:302px;top:623px;transform-origin:100% 0;">0</div><div class="t" style="right:252px;top:623px;transform-origin:100% 0;">0</div><div class="t" style="right:202px;top:623px;transform-origin:100% 0;">0</div><div class="t" style="left:138px;top:638px;transform-origin:0 0;">DR</div><svg class="a" style="left:167px;top:641px" width="14" height="7" viewBox="0 0 14 7" shape-rendering="crispEdges"><path d="M3 0h1v1h-1zM2 1h1v1h-1zM1 2h1v1h-1zM0 3h1v1h-1zM1 4h1v1h-1zM2 5h1v1h-1zM3 6h1v1h-1zM4 1h1v2h-1zM4 4h1v2h-1zM3 3h1v1h-1z" fill="#000"/><path d="M3 1h1v2h-1zM2 2h1v3h-1zM1 3h2v1h-2zM3 4h1v2h-1z" fill="#d0d0f0"/><path d="M6 3h2v1h-2z" fill="#000"/><path d="M10 0h1v1h-1zM11 1h1v1h-1zM12 2h1v1h-1zM13 3h1v1h-1zM12 4h1v1h-1zM11 5h1v1h-1zM10 6h1v1h-1zM9 1h1v2h-1zM9 4h1v2h-1zM10 3h1v1h-1z" fill="#000"/><path d="M10 1h1v2h-1zM11 2h1v3h-1zM11 3h2v1h-2zM10 4h1v2h-1z" fill="#d0d0f0"/></svg><div class="t" style="left:182px;top:638px;transform-origin:0 0;;transform:scaleX(0.87)">&lt;pptp-user44&gt;</div><div class="t" style="left:266px;top:638px;transform-origin:0 0;">PPTP Server</div><div class="t" style="right:588px;top:638px;transform-origin:100% 0;">0 bps</div><div class="t" style="right:502px;top:638px;transform-origin:100% 0;">0 bps</div><div class="t" style="right:452px;top:638px;transform-origin:100% 0;">0</div><div class="t" style="right:402px;top:638px;transform-origin:100% 0;">0</div><div class="t" style="right:352px;top:638px;transform-origin:100% 0;">0</div><div class="t" style="right:302px;top:638px;transform-origin:100% 0;">0</div><div class="t" style="right:252px;top:638px;transform-origin:100% 0;">0</div><div class="t" style="right:202px;top:638px;transform-origin:100% 0;">0</div><div class="t" style="left:138px;top:653px;transform-origin:0 0;">DR</div><svg class="a" style="left:167px;top:656px" width="14" height="7" viewBox="0 0 14 7" shape-rendering="crispEdges"><path d="M3 0h1v1h-1zM2 1h1v1h-1zM1 2h1v1h-1zM0 3h1v1h-1zM1 4h1v1h-1zM2 5h1v1h-1zM3 6h1v1h-1zM4 1h1v2h-1zM4 4h1v2h-1zM3 3h1v1h-1z" fill="#000"/><path d="M3 1h1v2h-1zM2 2h1v3h-1zM1 3h2v1h-2zM3 4h1v2h-1z" fill="#d0d0f0"/><path d="M6 3h2v1h-2z" fill="#000"/><path d="M10 0h1v1h-1zM11 1h1v1h-1zM12 2h1v1h-1zM13 3h1v1h-1zM12 4h1v1h-1zM11 5h1v1h-1zM10 6h1v1h-1zM9 1h1v2h-1zM9 4h1v2h-1zM10 3h1v1h-1z" fill="#000"/><path d="M10 1h1v2h-1zM11 2h1v3h-1zM11 3h2v1h-2zM10 4h1v2h-1z" fill="#d0d0f0"/></svg><div class="t" style="left:182px;top:653px;transform-origin:0 0;;transform:scaleX(0.87)">&lt;pptp-user50&gt;</div><div class="t" style="left:266px;top:653px;transform-origin:0 0;">PPTP Server</div><div class="t" style="right:588px;top:653px;transform-origin:100% 0;">0 bps</div><div class="t" style="right:502px;top:653px;transform-origin:100% 0;">0 bps</div><div class="t" style="right:452px;top:653px;transform-origin:100% 0;">0</div><div class="t" style="right:402px;top:653px;transform-origin:100% 0;">0</div><div class="t" style="right:352px;top:653px;transform-origin:100% 0;">0</div><div class="t" style="right:302px;top:653px;transform-origin:100% 0;">0</div><div class="t" style="right:252px;top:653px;transform-origin:100% 0;">0</div><div class="t" style="right:202px;top:653px;transform-origin:100% 0;">0</div><div class="t" style="left:138px;top:668px;transform-origin:0 0;">DR</div><svg class="a" style="left:167px;top:671px" width="14" height="7" viewBox="0 0 14 7" shape-rendering="crispEdges"><path d="M3 0h1v1h-1zM2 1h1v1h-1zM1 2h1v1h-1zM0 3h1v1h-1zM1 4h1v1h-1zM2 5h1v1h-1zM3 6h1v1h-1zM4 1h1v2h-1zM4 4h1v2h-1zM3 3h1v1h-1z" fill="#000"/><path d="M3 1h1v2h-1zM2 2h1v3h-1zM1 3h2v1h-2zM3 4h1v2h-1z" fill="#d0d0f0"/><path d="M6 3h2v1h-2z" fill="#000"/><path d="M10 0h1v1h-1zM11 1h1v1h-1zM12 2h1v1h-1zM13 3h1v1h-1zM12 4h1v1h-1zM11 5h1v1h-1zM10 6h1v1h-1zM9 1h1v2h-1zM9 4h1v2h-1zM10 3h1v1h-1z" fill="#000"/><path d="M10 1h1v2h-1zM11 2h1v3h-1zM11 3h2v1h-2zM10 4h1v2h-1z" fill="#d0d0f0"/></svg><div class="t" style="left:182px;top:668px;transform-origin:0 0;;transform:scaleX(0.87)">&lt;pptp-user67&gt;</div><div class="t" style="left:266px;top:668px;transform-origin:0 0;">PPTP Server</div><div class="t" style="right:588px;top:668px;transform-origin:100% 0;">0 bps</div><div class="t" style="right:502px;top:668px;transform-origin:100% 0;">0 bps</div><div class="t" style="right:452px;top:668px;transform-origin:100% 0;">0</div><div class="t" style="right:402px;top:668px;transform-origin:100% 0;">0</div><div class="t" style="right:352px;top:668px;transform-origin:100% 0;">0</div><div class="t" style="right:302px;top:668px;transform-origin:100% 0;">0</div><div class="t" style="right:252px;top:668px;transform-origin:100% 0;">0</div><div class="t" style="right:202px;top:668px;transform-origin:100% 0;">0</div><div class="t" style="left:138px;top:683px;transform-origin:0 0;">DR</div><svg class="a" style="left:167px;top:686px" width="14" height="7" viewBox="0 0 14 7" shape-rendering="crispEdges"><path d="M3 0h1v1h-1zM2 1h1v1h-1zM1 2h1v1h-1zM0 3h1v1h-1zM1 4h1v1h-1zM2 5h1v1h-1zM3 6h1v1h-1zM4 1h1v2h-1zM4 4h1v2h-1zM3 3h1v1h-1z" fill="#000"/><path d="M3 1h1v2h-1zM2 2h1v3h-1zM1 3h2v1h-2zM3 4h1v2h-1z" fill="#d0d0f0"/><path d="M6 3h2v1h-2z" fill="#000"/><path d="M10 0h1v1h-1zM11 1h1v1h-1zM12 2h1v1h-1zM13 3h1v1h-1zM12 4h1v1h-1zM11 5h1v1h-1zM10 6h1v1h-1zM9 1h1v2h-1zM9 4h1v2h-1zM10 3h1v1h-1z" fill="#000"/><path d="M10 1h1v2h-1zM11 2h1v3h-1zM11 3h2v1h-2zM10 4h1v2h-1z" fill="#d0d0f0"/></svg><div class="t" style="left:182px;top:683px;transform-origin:0 0;;transform:scaleX(0.87)">&lt;pptp-user68&gt;</div><div class="t" style="left:266px;top:683px;transform-origin:0 0;">PPTP Server</div><div class="t" style="right:588px;top:683px;transform-origin:100% 0;">0 bps</div><div class="t" style="right:502px;top:683px;transform-origin:100% 0;">0 bps</div><div class="t" style="right:452px;top:683px;transform-origin:100% 0;">0</div><div class="t" style="right:402px;top:683px;transform-origin:100% 0;">0</div><div class="t" style="right:352px;top:683px;transform-origin:100% 0;">0</div><div class="t" style="right:302px;top:683px;transform-origin:100% 0;">0</div><div class="t" style="right:252px;top:683px;transform-origin:100% 0;">0</div><div class="t" style="right:202px;top:683px;transform-origin:100% 0;">0</div><div class="t" style="left:138px;top:698px;transform-origin:0 0;">DR</div><svg class="a" style="left:167px;top:701px" width="14" height="7" viewBox="0 0 14 7" shape-rendering="crispEdges"><path d="M3 0h1v1h-1zM2 1h1v1h-1zM1 2h1v1h-1zM0 3h1v1h-1zM1 4h1v1h-1zM2 5h1v1h-1zM3 6h1v1h-1zM4 1h1v2h-1zM4 4h1v2h-1zM3 3h1v1h-1z" fill="#000"/><path d="M3 1h1v2h-1zM2 2h1v3h-1zM1 3h2v1h-2zM3 4h1v2h-1z" fill="#d0d0f0"/><path d="M6 3h2v1h-2z" fill="#000"/><path d="M10 0h1v1h-1zM11 1h1v1h-1zM12 2h1v1h-1zM13 3h1v1h-1zM12 4h1v1h-1zM11 5h1v1h-1zM10 6h1v1h-1zM9 1h1v2h-1zM9 4h1v2h-1zM10 3h1v1h-1z" fill="#000"/><path d="M10 1h1v2h-1zM11 2h1v3h-1zM11 3h2v1h-2zM10 4h1v2h-1z" fill="#d0d0f0"/></svg><div class="t" style="left:182px;top:698px;transform-origin:0 0;;transform:scaleX(0.87)">&lt;pptp-user100&gt;</div><div class="t" style="left:266px;top:698px;transform-origin:0 0;">PPTP Server</div><div class="t" style="right:588px;top:698px;transform-origin:100% 0;">0 bps</div><div class="t" style="right:502px;top:698px;transform-origin:100% 0;">0 bps</div><div class="t" style="right:452px;top:698px;transform-origin:100% 0;">0</div><div class="t" style="right:402px;top:698px;transform-origin:100% 0;">0</div><div class="t" style="right:352px;top:698px;transform-origin:100% 0;">0</div><div class="t" style="right:302px;top:698px;transform-origin:100% 0;">0</div><div class="t" style="right:252px;top:698px;transform-origin:100% 0;">0</div><div class="t" style="right:202px;top:698px;transform-origin:100% 0;">0</div><div class="t" style="left:138px;top:713px;transform-origin:0 0;">DR</div><svg class="a" style="left:167px;top:716px" width="14" height="7" viewBox="0 0 14 7" shape-rendering="crispEdges"><path d="M3 0h1v1h-1zM2 1h1v1h-1zM1 2h1v1h-1zM0 3h1v1h-1zM1 4h1v1h-1zM2 5h1v1h-1zM3 6h1v1h-1zM4 1h1v2h-1zM4 4h1v2h-1zM3 3h1v1h-1z" fill="#000"/><path d="M3 1h1v2h-1zM2 2h1v3h-1zM1 3h2v1h-2zM3 4h1v2h-1z" fill="#d0d0f0"/><path d="M6 3h2v1h-2z" fill="#000"/><path d="M10 0h1v1h-1zM11 1h1v1h-1zM12 2h1v1h-1zM13 3h1v1h-1zM12 4h1v1h-1zM11 5h1v1h-1zM10 6h1v1h-1zM9 1h1v2h-1zM9 4h1v2h-1zM10 3h1v1h-1z" fill="#000"/><path d="M10 1h1v2h-1zM11 2h1v3h-1zM11 3h2v1h-2zM10 4h1v2h-1z" fill="#d0d0f0"/></svg><div class="t" style="left:182px;top:713px;transform-origin:0 0;;transform:scaleX(0.87)">&lt;pptp-user189&gt;</div><div class="t" style="left:266px;top:713px;transform-origin:0 0;">PPTP Server</div><div class="t" style="right:588px;top:713px;transform-origin:100% 0;">0 bps</div><div class="t" style="right:502px;top:713px;transform-origin:100% 0;">0 bps</div><div class="t" style="right:452px;top:713px;transform-origin:100% 0;">0</div><div class="t" style="right:402px;top:713px;transform-origin:100% 0;">0</div><div class="t" style="right:352px;top:713px;transform-origin:100% 0;">0</div><div class="t" style="right:302px;top:713px;transform-origin:100% 0;">0</div><div class="t" style="right:252px;top:713px;transform-origin:100% 0;">0</div><div class="t" style="right:202px;top:713px;transform-origin:100% 0;">0</div><div class="t" style="left:138px;top:728px;transform-origin:0 0;">DR</div><svg class="a" style="left:167px;top:731px" width="14" height="7" viewBox="0 0 14 7" shape-rendering="crispEdges"><path d="M3 0h1v1h-1zM2 1h1v1h-1zM1 2h1v1h-1zM0 3h1v1h-1zM1 4h1v1h-1zM2 5h1v1h-1zM3 6h1v1h-1zM4 1h1v2h-1zM4 4h1v2h-1zM3 3h1v1h-1z" fill="#000"/><path d="M3 1h1v2h-1zM2 2h1v3h-1zM1 3h2v1h-2zM3 4h1v2h-1z" fill="#d0d0f0"/><path d="M6 3h2v1h-2z" fill="#000"/><path d="M10 0h1v1h-1zM11 1h1v1h-1zM12 2h1v1h-1zM13 3h1v1h-1zM12 4h1v1h-1zM11 5h1v1h-1zM10 6h1v1h-1zM9 1h1v2h-1zM9 4h1v2h-1zM10 3h1v1h-1z" fill="#000"/><path d="M10 1h1v2h-1zM11 2h1v3h-1zM11 3h2v1h-2zM10 4h1v2h-1z" fill="#d0d0f0"/></svg><div class="t" style="left:182px;top:728px;transform-origin:0 0;;transform:scaleX(0.87)">&lt;pptp-user223&gt;</div><div class="t" style="left:266px;top:728px;transform-origin:0 0;">PPTP Server</div><div class="t" style="right:588px;top:728px;transform-origin:100% 0;">0 bps</div><div class="t" style="right:502px;top:728px;transform-origin:100% 0;">0 bps</div><div class="t" style="right:452px;top:728px;transform-origin:100% 0;">0</div><div class="t" style="right:402px;top:728px;transform-origin:100% 0;">0</div><div class="t" style="right:352px;top:728px;transform-origin:100% 0;">0</div><div class="t" style="right:302px;top:728px;transform-origin:100% 0;">0</div><div class="t" style="right:252px;top:728px;transform-origin:100% 0;">0</div><div class="t" style="right:202px;top:728px;transform-origin:100% 0;">0</div><div class="t" style="left:138px;top:743px;transform-origin:0 0;">DR</div><svg class="a" style="left:167px;top:746px" width="14" height="7" viewBox="0 0 14 7" shape-rendering="crispEdges"><path d="M3 0h1v1h-1zM2 1h1v1h-1zM1 2h1v1h-1zM0 3h1v1h-1zM1 4h1v1h-1zM2 5h1v1h-1zM3 6h1v1h-1zM4 1h1v2h-1zM4 4h1v2h-1zM3 3h1v1h-1z" fill="#000"/><path d="M3 1h1v2h-1zM2 2h1v3h-1zM1 3h2v1h-2zM3 4h1v2h-1z" fill="#d0d0f0"/><path d="M6 3h2v1h-2z" fill="#000"/><path d="M10 0h1v1h-1zM11 1h1v1h-1zM12 2h1v1h-1zM13 3h1v1h-1zM12 4h1v1h-1zM11 5h1v1h-1zM10 6h1v1h-1zM9 1h1v2h-1zM9 4h1v2h-1zM10 3h1v1h-1z" fill="#000"/><path d="M10 1h1v2h-1zM11 2h1v3h-1zM11 3h2v1h-2zM10 4h1v2h-1z" fill="#d0d0f0"/></svg><div class="t" style="left:182px;top:743px;transform-origin:0 0;;transform:scaleX(0.87)">&lt;pptp-user248&gt;</div><div class="t" style="left:266px;top:743px;transform-origin:0 0;">PPTP Server</div><div class="t" style="right:588px;top:743px;transform-origin:100% 0;">0 bps</div><div class="t" style="right:502px;top:743px;transform-origin:100% 0;">0 bps</div><div class="t" style="right:452px;top:743px;transform-origin:100% 0;">0</div><div class="t" style="right:402px;top:743px;transform-origin:100% 0;">0</div><div class="t" style="right:352px;top:743px;transform-origin:100% 0;">0</div><div class="t" style="right:302px;top:743px;transform-origin:100% 0;">0</div><div class="t" style="right:252px;top:743px;transform-origin:100% 0;">0</div><div class="t" style="right:202px;top:743px;transform-origin:100% 0;">0</div><div class="t" style="left:138px;top:758px;transform-origin:0 0;">R</div><svg class="a" style="left:167px;top:761px" width="14" height="7" viewBox="0 0 14 7" shape-rendering="crispEdges"><path d="M3 0h1v1h-1zM2 1h1v1h-1zM1 2h1v1h-1zM0 3h1v1h-1zM1 4h1v1h-1zM2 5h1v1h-1zM3 6h1v1h-1zM4 1h1v2h-1zM4 4h1v2h-1zM3 3h1v1h-1z" fill="#000"/><path d="M3 1h1v2h-1zM2 2h1v3h-1zM1 3h2v1h-2zM3 4h1v2h-1z" fill="#d0d0f0"/><path d="M6 3h2v1h-2z" fill="#000"/><path d="M10 0h1v1h-1zM11 1h1v1h-1zM12 2h1v1h-1zM13 3h1v1h-1zM12 4h1v1h-1zM11 5h1v1h-1zM10 6h1v1h-1zM9 1h1v2h-1zM9 4h1v2h-1zM10 3h1v1h-1z" fill="#000"/><path d="M10 1h1v2h-1zM11 2h1v3h-1zM11 3h2v1h-2zM10 4h1v2h-1z" fill="#d0d0f0"/></svg><div class="t" style="left:182px;top:758px;transform-origin:0 0;">Internet</div><div class="t" style="left:266px;top:758px;transform-origin:0 0;">PPTP Client</div><div class="t" style="right:588px;top:758px;transform-origin:100% 0;">11.5 kbps</div><div class="t" style="right:502px;top:758px;transform-origin:100% 0;">10.3 kbps</div><div class="t" style="right:452px;top:758px;transform-origin:100% 0;">14</div><div class="t" style="right:402px;top:758px;transform-origin:100% 0;">8</div><div class="t" style="right:352px;top:758px;transform-origin:100% 0;">0</div><div class="t" style="right:302px;top:758px;transform-origin:100% 0;">0</div><div class="t" style="right:252px;top:758px;transform-origin:100% 0;">0</div><div class="t" style="right:202px;top:758px;transform-origin:100% 0;">0</div><div class="t" style="left:138px;top:773px;transform-origin:0 0;">R</div><svg class="a" style="left:167px;top:774px" width="14" height="11" viewBox="0 0 14 11" shape-rendering="crispEdges"><path d="M3 2h1v1h-1zM2 3h1v1h-1zM1 4h1v1h-1zM0 5h1v1h-1zM1 6h1v1h-1zM2 7h1v1h-1zM3 8h1v1h-1zM4 3h1v2h-1zM4 6h1v2h-1zM3 5h1v1h-1z" fill="#000"/><path d="M3 3h1v2h-1zM2 4h1v3h-1zM1 5h2v1h-2zM3 6h1v2h-1z" fill="#a01a2c"/><path d="M6 0h2v4h-2zM6 5h2v1h-2zM6 7h2v4h-2z" fill="#000"/><path d="M10 2h1v1h-1zM11 3h1v1h-1zM12 4h1v1h-1zM13 5h1v1h-1zM12 6h1v1h-1zM11 7h1v1h-1zM10 8h1v1h-1zM9 3h1v2h-1zM9 6h1v2h-1zM10 5h1v1h-1z" fill="#000"/><path d="M10 3h1v2h-1zM11 4h1v3h-1zM11 5h2v1h-2zM10 6h1v2h-1z" fill="#a01a2c"/></svg><div class="t" style="left:182px;top:773px;transform-origin:0 0;">LOCAL</div><div class="t" style="left:266px;top:773px;transform-origin:0 0;">Ethernet</div><div class="t" style="right:588px;top:773px;transform-origin:100% 0;">14.4 kbps</div><div class="t" style="right:502px;top:773px;transform-origin:100% 0;">19.7 kbps</div><div class="t" style="right:452px;top:773px;transform-origin:100% 0;">9</div><div class="t" style="right:402px;top:773px;transform-origin:100% 0;">19</div><div class="t" style="right:352px;top:773px;transform-origin:100% 0;">0</div><div class="t" style="right:302px;top:773px;transform-origin:100% 0;">0</div><div class="t" style="right:252px;top:773px;transform-origin:100% 0;">0</div><div class="t" style="right:202px;top:773px;transform-origin:100% 0;">0</div><svg class="a" style="left:167px;top:791px" width="14" height="7" viewBox="0 0 14 7" shape-rendering="crispEdges"><path d="M3 0h1v1h-1zM2 1h1v1h-1zM1 2h1v1h-1zM0 3h1v1h-1zM1 4h1v1h-1zM2 5h1v1h-1zM3 6h1v1h-1zM4 1h1v2h-1zM4 4h1v2h-1zM3 3h1v1h-1z" fill="#000"/><path d="M3 1h1v2h-1zM2 2h1v3h-1zM1 3h2v1h-2zM3 4h1v2h-1z" fill="#d0d0f0"/><path d="M6 3h2v1h-2z" fill="#000"/><path d="M10 0h1v1h-1zM11 1h1v1h-1zM12 2h1v1h-1zM13 3h1v1h-1zM12 4h1v1h-1zM11 5h1v1h-1zM10 6h1v1h-1zM9 1h1v2h-1zM9 4h1v2h-1zM10 3h1v1h-1z" fill="#000"/><path d="M10 1h1v2h-1zM11 2h1v3h-1zM11 3h2v1h-2zM10 4h1v2h-1z" fill="#d0d0f0"/></svg><div class="t" style="left:182px;top:788px;transform-origin:0 0;">VPN server</div><div class="t" style="left:266px;top:788px;transform-origin:0 0;">PPTP Server</div><div class="t" style="right:588px;top:788px;transform-origin:100% 0;">0 bps</div><div class="t" style="right:502px;top:788px;transform-origin:100% 0;">0 bps</div><div class="t" style="right:452px;top:788px;transform-origin:100% 0;">0</div><div class="t" style="right:402px;top:788px;transform-origin:100% 0;">0</div><div class="t" style="right:352px;top:788px;transform-origin:100% 0;">0</div><div class="t" style="right:302px;top:788px;transform-origin:100% 0;">0</div><div class="t" style="right:252px;top:788px;transform-origin:100% 0;">0</div><div class="t" style="right:202px;top:788px;transform-origin:100% 0;">0</div><div class="t" style="left:138px;top:803px;transform-origin:0 0;">R</div><svg class="a" style="left:167px;top:804px" width="14" height="11" viewBox="0 0 14 11" shape-rendering="crispEdges"><path d="M3 2h1v1h-1zM2 3h1v1h-1zM1 4h1v1h-1zM0 5h1v1h-1zM1 6h1v1h-1zM2 7h1v1h-1zM3 8h1v1h-1zM4 3h1v2h-1zM4 6h1v2h-1zM3 5h1v1h-1z" fill="#000"/><path d="M3 3h1v2h-1zM2 4h1v3h-1zM1 5h2v1h-2zM3 6h1v2h-1z" fill="#a01a2c"/><path d="M6 0h2v4h-2zM6 5h2v1h-2zM6 7h2v4h-2z" fill="#000"/><path d="M10 2h1v1h-1zM11 3h1v1h-1zM12 4h1v1h-1zM13 5h1v1h-1zM12 6h1v1h-1zM11 7h1v1h-1zM10 8h1v1h-1zM9 3h1v2h-1zM9 6h1v2h-1zM10 5h1v1h-1z" fill="#000"/><path d="M10 3h1v2h-1zM11 4h1v3h-1zM11 5h2v1h-2zM10 6h1v2h-1z" fill="#a01a2c"/></svg><div class="t" style="left:182px;top:803px;transform-origin:0 0;">WAN</div><div class="t" style="left:266px;top:803px;transform-origin:0 0;">Ethernet</div><div class="t" style="right:588px;top:803px;transform-origin:100% 0;">21.0 kbps</div><div class="t" style="right:502px;top:803px;transform-origin:100% 0;">18.1 kbps</div><div class="t" style="right:452px;top:803px;transform-origin:100% 0;">17</div><div class="t" style="right:402px;top:803px;transform-origin:100% 0;">14</div><div class="t" style="right:352px;top:803px;transform-origin:100% 0;">0</div><div class="t" style="right:302px;top:803px;transform-origin:100% 0;">0</div><div class="t" style="right:252px;top:803px;transform-origin:100% 0;">0</div><div class="t" style="right:202px;top:803px;transform-origin:100% 0;">0</div><div class="t" style="left:138px;top:844px;transform-origin:0 0;;transform:scaleX(0.83)">19 items</div>
</body></html>
